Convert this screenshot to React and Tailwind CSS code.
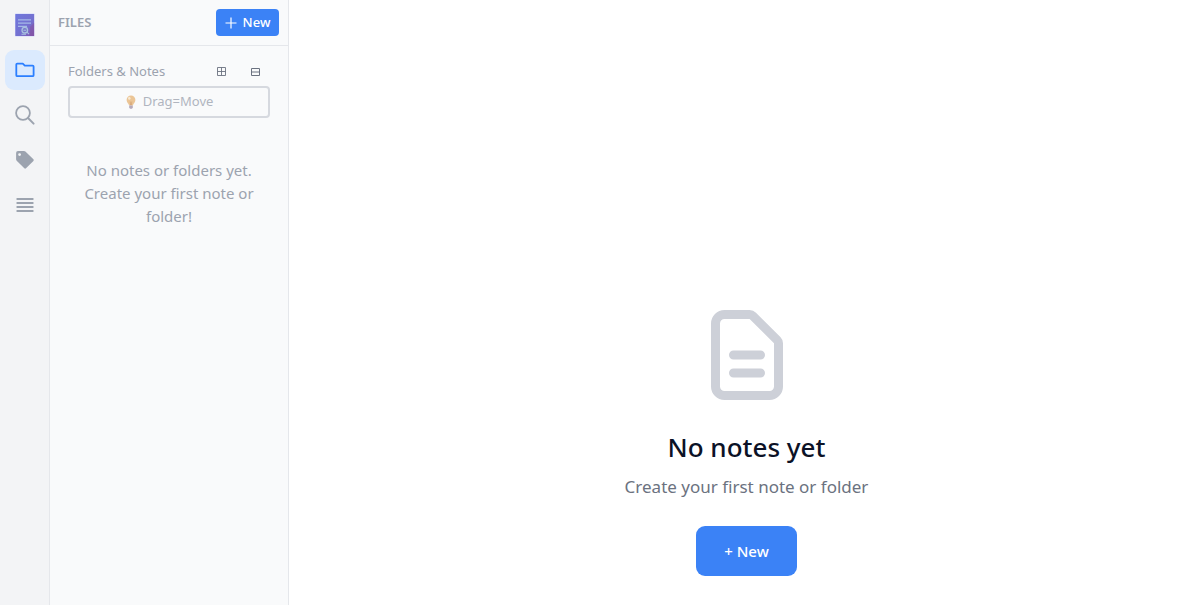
function Logo() {
  return (
    <svg className="h-6 w-5" viewBox="0 0 20 24" role="img" aria-label="Notes">
      <defs>
        <linearGradient id="cover" x1="0" y1="0" x2="1" y2="1">
          <stop offset="0" stopColor="#6f78dc" />
          <stop offset="0.6" stopColor="#7470cf" />
          <stop offset="1" stopColor="#8154ad" />
        </linearGradient>
      </defs>
      <rect x="0" y="0.3" width="19.6" height="23.4" rx="0.8" fill="#dcdffb" />
      <rect x="0.3" y="1" width="18.8" height="22" rx="0.5" fill="url(#cover)" />
      <path d="M19.1 10 15 14v9h4.1z" fill="#884f9c" opacity="0.45" />
      <path d="M3 6.8h13M3 10.2h13M3 13.4h9" stroke="#a5b9e8" strokeWidth="1.3" />
      <circle cx="9.8" cy="17.2" r="2.8" fill="#7777cb" stroke="#a8c2df" strokeWidth="1.3" />
      <path d="m12 19.2 2 2M8.5 17.2h2.700M6.500 21.300h4.500" stroke="#a8c2df" strokeWidth="1.1" />
    </svg>
  );
}

function FolderIcon() {
  return (
    <svg className="size-6" viewBox="0 0 24 24" fill="none" stroke="currentColor" strokeWidth="1.8" strokeLinejoin="round" aria-hidden="true">
      <path d="M3.3 6.6a1 1 0 0 1 1-1h5.500l2 2h7.800a1 1 0 0 1 1 1v8.600a1 1 0 0 1-1 1H4.300a1 1 0 0 1-1-1z" />
    </svg>
  );
}

function SearchIcon() {
  return (
    <svg className="size-6" viewBox="0 0 24 24" fill="none" stroke="currentColor" strokeWidth="1.8" strokeLinecap="round" aria-hidden="true">
      <circle cx="10" cy="10" r="6.9" />
      <path d="m15 15 5.6 5.6" strokeWidth="2" />
    </svg>
  );
}

function TagIcon() {
  return (
    <svg className="size-6" viewBox="0 0 24 24" fill="currentColor" aria-hidden="true">
      <path
        fillRule="evenodd"
        d="M5 3h6a2 2 0 0 1 1.4.6l8 7.600a1.200 1.200 0 0 1 0 1.700l-7.400 7.400a1.200 1.200 0 0 1-1.700 0l-7.600-7.600a2 2 0 0 1-.6-1.400V5A2 2 0 0 1 5 3zM6.600 5.200a1.400 1.400 0 1 0 0 2.800 1.400 1.400 0 0 0 0-2.800z"
      />
    </svg>
  );
}

function ListIcon() {
  return (
    <svg className="size-6" viewBox="0 0 24 24" stroke="currentColor" strokeWidth="2" strokeLinecap="round" aria-hidden="true">
      <path d="M4.3 6h15.4M4.3 10h15.4M4.3 14h15.4M4.3 18h15.4" />
    </svg>
  );
}

function BulbIcon() {
  return (
    <svg className="h-4 w-3" viewBox="0 0 12 16" aria-hidden="true">
      <path d="M6 1.5a4.400 4.400 0 0 0-4.400 4.400c0 2.500 2 3.300 2.500 5.600h3.800c.5-2.300 2.500-3.100 2.500-5.600A4.400 4.400 0 0 0 6 1.500z" fill="#ebc596" />
      <path d="M5.200 7.500 5.600 11h.8l.4-3.500" fill="none" stroke="#d3a273" strokeWidth="0.7" />
      <ellipse cx="4.3" cy="4.3" rx="1.2" ry="1.5" fill="#f8e9d3" />
      <path d="M4.200 11.500h3.600v2L7 14.800H5l-.8-1.300z" fill="#b5a9bb" />
    </svg>
  );
}

const tabs = [
  { name: "Files", Icon: FolderIcon },
  { name: "Search", Icon: SearchIcon },
  { name: "Tags", Icon: TagIcon },
  { name: "Outline", Icon: ListIcon },
];

export default function App() {
  return (
    <div className="flex h-screen overflow-hidden bg-white font-['Noto_Sans',sans-serif]">
      <nav aria-label="Views" className="flex w-[50px] shrink-0 flex-col items-center gap-[5px] border-r border-gray-200 bg-gray-100 pt-[13px]">
        <div className="mb-2">
          <Logo />
        </div>
        {tabs.map(({ name, Icon }, i) => (
          <button
            key={name}
            aria-label={name}
            className={
              i === 0
                ? "flex size-10 items-center justify-center rounded-[9px] bg-[#dbeafe] text-[#2b7fff]"
                : "flex size-10 items-center justify-center rounded-[9px] text-[#9ca3af]"
            }
          >
            <Icon />
          </button>
        ))}
      </nav>

      <aside className="w-[239px] shrink-0 border-r border-gray-200 bg-[#f9fafb]">
        <header className="flex h-[46px] items-center justify-between border-b border-gray-200 pr-[9px] pl-2">
          <h2 className="text-[13px] font-semibold text-[#9ca3af]">FILES</h2>
          <button className="flex h-[27px] w-[63px] items-center justify-center gap-[6px] rounded bg-[#3b82f6] text-[13px] font-medium text-white">
            <svg className="size-3" viewBox="0 0 12 12" stroke="currentColor" strokeWidth="1.2" aria-hidden="true">
              <path d="M6 .500v11M.500 6h11" />
            </svg>
            New
          </button>
        </header>
        <div className="px-[18px] pt-4">
          <div className="flex h-5 items-center justify-between pr-[9px]">
            <h3 className="text-[13px] text-[#9ca3af]">Folders &amp; Notes</h3>
            <div className="flex gap-6 text-[#6b7280]">
              <button aria-label="Expand all">
                <svg className="size-[10px]" viewBox="0 0 10 10" fill="none" stroke="currentColor" strokeWidth="0.9" aria-hidden="true">
                  <path d="M.5.5h8v8h-8zM.5 4.5h8M4.5.5v8" />
                </svg>
              </button>
              <button aria-label="Collapse all">
                <svg className="size-[10px]" viewBox="0 0 10 10" fill="none" stroke="currentColor" aria-hidden="true">
                  <path d="M.5 1.5h8v7h-8zM.5 5h8" />
                </svg>
              </button>
            </div>
          </div>
          <div className="mt-1 flex h-8 items-center justify-center gap-[6px] rounded border-2 border-[#d6d9df] text-[13px] text-[#b0b5bf]">
            <BulbIcon />
            Drag=Move
          </div>
          <p className="mt-[41px] px-3 text-center text-[15px] leading-[23px] text-[#9ca3af]">
            No notes or folders yet. Create your first note or folder!
          </p>
        </div>
      </aside>

      <main className="flex min-w-0 flex-1 flex-col items-center pt-[301px] pl-1">
        <svg className="size-[108px] shrink-0 text-[#cdd0d8]" viewBox="0 0 24 24" fill="none" stroke="currentColor" strokeWidth="2" strokeLinecap="round" strokeLinejoin="round" aria-hidden="true">
          <path d="M9 12h6m-6 4h6m2 5H7a2 2 0 01-2-2V5a2 2 0 012-2h5.586a1 1 0 01.707.293l5.414 5.414a1 1 0 01.293.707V19a2 2 0 01-2 2z" />
        </svg>
        <h1 className="mt-5 text-[26px] leading-9 font-medium text-[#0c1226]">No notes yet</h1>
        <p className="mt-2 text-[17px] leading-7 text-[#6b7280]">Create your first note or folder</p>
        <button className="mt-[25px] h-[50px] w-[101px] shrink-0 rounded-[9px] bg-[#3b82f6] text-[15px] font-medium text-white">
          + New
        </button>
      </main>
    </div>
  );
}
